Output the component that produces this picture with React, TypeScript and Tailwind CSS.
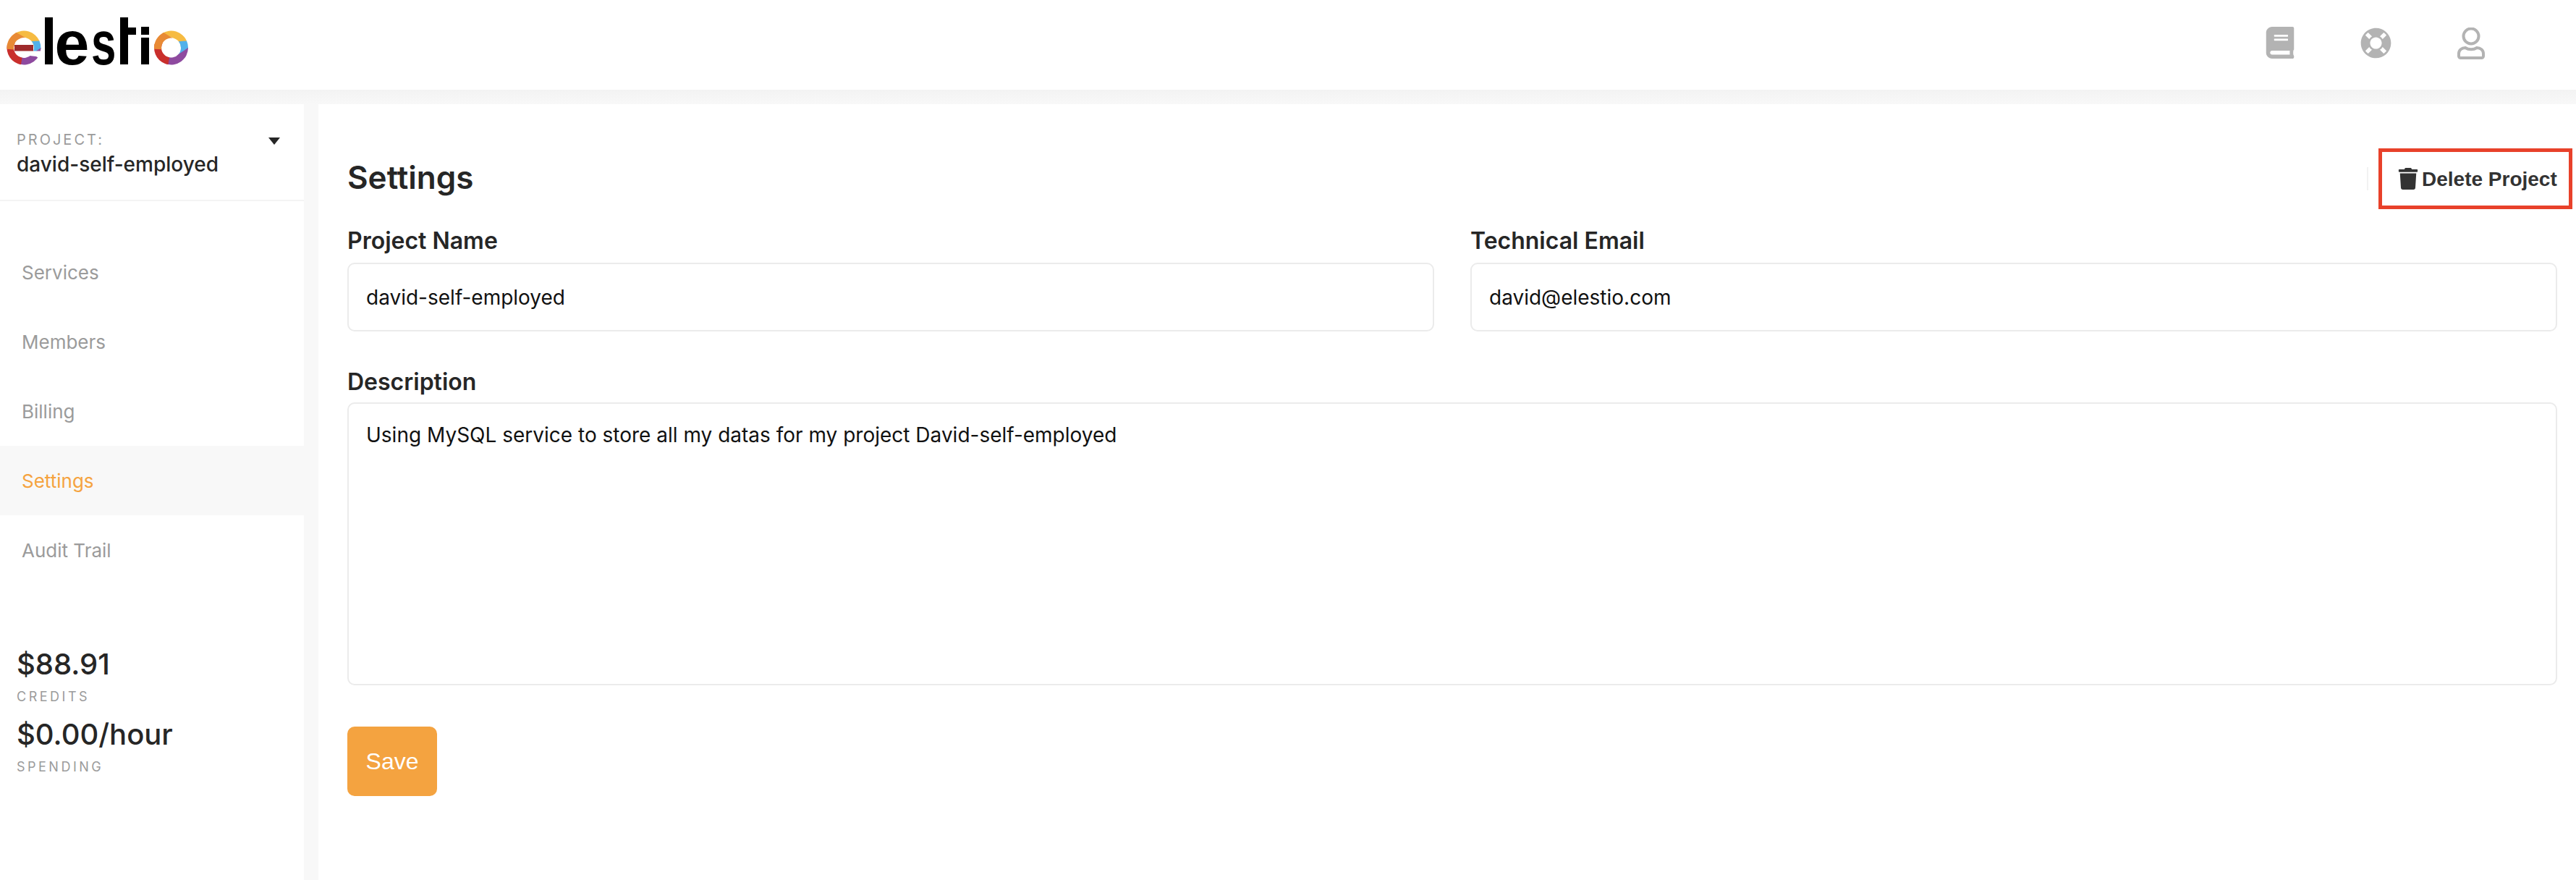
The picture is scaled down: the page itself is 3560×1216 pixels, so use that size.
import React from 'react';
import { FaBook, FaLifeRing, FaTrash } from 'react-icons/fa';

const navItems = ['Services', 'Members', 'Billing', 'Settings', 'Audit Trail'];

// ring cut into five coloured blades, shared by the "e" and the "o" of the logo
const LogoRing: React.FC<{ cx: number; isE?: boolean }> = ({ cx, isE }) => {
  const R = 23.5;
  const r = isE ? 14 : 13.5;
  const pt = (rad: number, deg: number) => {
    const a = (deg * Math.PI) / 180;
    return `${(cx + rad * Math.cos(a)).toFixed(2)} ${(66 + rad * Math.sin(a)).toFixed(2)}`;
  };
  const blade = (a0: number, a1: number, i0: number, i1: number, fill: string) => (
    <path
      d={`M${pt(r, i0)} L${pt(R, a0)} A${R} ${R} 0 0 1 ${pt(R, a1)} L${pt(r, i1)} A${r} ${r} 0 0 0 ${pt(r, i0)}Z`}
      fill={fill}
    />
  );
  return (
    <g>
      {blade(-122, -24, -62, 5, '#f6bb42')}
      {blade(-24, 4, -40, 46, '#52b1ea')}
      {blade(0, 108, 40, 118, '#8e4a9f')}
      {blade(100, 192, 100, 210, '#c92f2c')}
      {blade(176, 244, 170, 280, '#e88a35')}
      {isE && (
        <>
          <path d={`M${cx + 11} 70.500 L${cx + 25} 70.500 L${cx + 25} 83 L${cx + 17} 78 L${cx + 8} 77 Z`} fill="#ffffff" />
          <rect x={cx - 13} y={62} width={26} height={8.500} fill="#9e2a2b" />
        </>
      )}
    </g>
  );
};

const Logo = () => (
  <svg width="280" height="124" viewBox="0 0 280 124" className="block">
    <LogoRing cx={33} isE />
    <rect x="62" y="24" width="11" height="65" fill="#000" />
    <text x="75.500" y="89" fontFamily="Liberation Sans, sans-serif" fontWeight="700" fontSize="86" fill="#000">e</text>
    <text transform="translate(126 89) scale(.72 1)" fontFamily="Liberation Sans, sans-serif" fontWeight="700" fontSize="86" fill="#000">s</text>
    <rect x="166" y="24" width="11" height="65" fill="#000" />
    <rect x="166" y="38" width="22" height="10" fill="#000" />
    <rect x="195" y="37" width="11" height="11" fill="#000" />
    <rect x="195" y="52" width="11" height="37" fill="#000" />
    <LogoRing cx={236.5} />
  </svg>
);

const UserIcon = () => (
  <svg width="38" height="44" viewBox="0 0 38 44" fill="none" stroke="#b3b3b3" strokeWidth="4">
    <circle cx="19" cy="12" r="10.5" />
    <path d="M11 28c2.5 1.6 5 2.2 8 2.2s5.500-.6 8-2.200c5 0 9 3.300 9 8v3.500a2.500 2.500 0 0 1-2.500 2.500h-29a2.500 2.500 0 0 1-2.500-2.500v-3.500c0-4.700 4-8 9-8z" />
  </svg>
);

const Field: React.FC<{ label: string; value: string }> = ({ label, value }) => (
  <div className="flex-1">
    <label className="block text-[32px] leading-[36px] font-semibold text-[#262626] mb-3">{label}</label>
    <input
      readOnly
      value={value}
      className="block w-full h-[95px] px-6 border-2 border-[#ebebeb] rounded-[10px] text-[28px] text-[#111] outline-none bg-white"
    />
  </div>
);

export default function App() {
  return (
    <div className="h-[1216px] overflow-hidden bg-[#f8f8f8] font-[Inter,sans-serif] flex flex-col">
      <header className="h-[124px] bg-white flex justify-between shrink-0">
        <Logo />
        <div className="flex items-start gap-[91px] pt-[37px] pr-[126px] text-[#b3b3b3]">
          <FaBook size={44} className="-mr-[2px]" />
          <FaLifeRing size={43} className="mt-[1px]" />
          <div className="mt-[1px]"><UserIcon /></div>
        </div>
      </header>
      <div className="h-5 shrink-0 bg-gradient-to-b from-[#f3f3f3] to-[#f8f8f8]" />

      <div className="flex flex-1 gap-5 min-h-0">
        <aside className="w-[420px] bg-white shrink-0">
          <div className="relative h-[134px] pt-[37px] pl-[23px] border-b-2 border-[#f4f4f4]">
            <div className="text-[20px] leading-6 tracking-[3px] text-[#9b9b9b]">PROJECT:</div>
            <div className="text-[28px] leading-[36px] font-medium text-[#262626] mt-[4px]">david-self-employed</div>
            <svg width="16" height="10" viewBox="0 0 16 10" className="absolute left-[371px] top-[46px]">
              <path d="M0 0h16L8 10z" fill="#262626" />
            </svg>
          </div>
          <nav className="pt-[50px]">
            {navItems.map((item) => (
              <div
                key={item}
                className={`h-[96px] flex items-center pl-[30px] text-[26px] ${
                  item === 'Settings' ? 'bg-[#f8f8f8] text-[#f5a33f]' : 'text-[#9b9b9b]'
                }`}
              >
                {item}
              </div>
            ))}
          </nav>
          <div className="pl-[23px] pt-[86px]">
            <div className="text-[40px] leading-[48px] font-medium text-[#262626]">$88.91</div>
            <div className="text-[18px] leading-[22px] tracking-[3.500px] text-[#9b9b9b] mt-[10px]">CREDITS</div>
            <div className="text-[40px] leading-[48px] font-medium text-[#262626] mt-[17px]">$0.00/hour</div>
            <div className="text-[18px] leading-[22px] tracking-[3.500px] text-[#9b9b9b] mt-[10px]">SPENDING</div>
          </div>
        </aside>

        <main className="flex-1 bg-white pl-10 pr-[26px] pt-[61px]">
          <div className="flex justify-between items-center h-[84px] -mr-[21px] mb-[26px]">
            <h1 className="text-[44px] font-semibold text-[#262626] pb-1">Settings</h1>
            <div className="flex items-center">
              <div className="w-[2px] h-8 bg-[#f2f2f2] mr-[14px]" />
              <button className="flex items-center h-[84px] w-[268px] border-[5px] border-[#e8412a] pl-[21px] pt-[2px] font-['Liberation_Sans',sans-serif] font-bold text-[28px] text-[#333]">
                <FaTrash size={30} className="mr-[5px] -mt-[2px]" />
                <span className="-ml-[1px]">Delete Project</span>
              </button>
            </div>
          </div>
          <div className="flex gap-[50px]">
            <Field label="Project Name" value="david-self-employed" />
            <Field label="Technical Email" value="david@elestio.com" />
          </div>
          <label className="block text-[32px] leading-[36px] font-semibold text-[#262626] mt-[52px] mb-[10px]">Description</label>
          <textarea
            readOnly
            value="Using MySQL service to store all my datas for my project David-self-employed"
            className="block w-full h-[391px] px-6 pt-[26px] pb-6 border-2 border-[#ebebeb] rounded-[10px] text-[28px] leading-[34px] text-[#111] outline-none resize-none"
          />
          <button className="mt-[57px] w-[124px] h-[96px] bg-[#f4a340] rounded-[10px] text-white text-[32px] font-['Liberation_Sans',sans-serif]">
            Save
          </button>
        </main>
      </div>
    </div>
  );
}
